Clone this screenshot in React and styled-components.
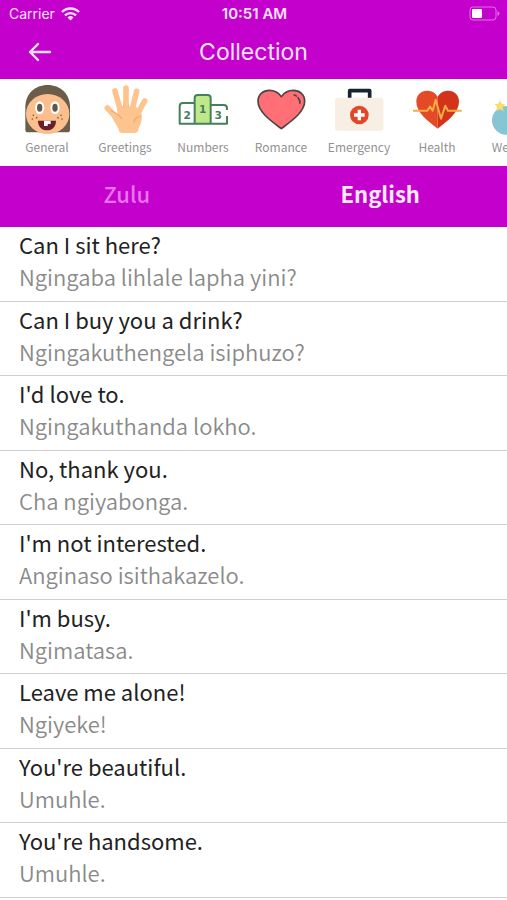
import React, { useState } from "react";
import styled, { createGlobalStyle } from "styled-components";

const GlobalStyle = createGlobalStyle`
  * {
    box-sizing: border-box;
  }
  body {
    margin: 0;
    background: #fff;
    font-family: "Noto Sans CJK SC", "Noto Sans", sans-serif;
  }
  button {
    border: 0;
    padding: 0;
    background: none;
    font: inherit;
    cursor: pointer;
  }
`;

const TopBar = styled.header`
  background: #c400cc;
  color: #fbe3fc;
  font-family: Inter, sans-serif;
`;

const StatusBar = styled.div`
  display: grid;
  grid-template-columns: 1fr auto 1fr;
  align-items: center;
  height: 27px;
  padding: 0 7px 0 9px;
  font-size: 14px;
`;

const Carrier = styled.div`
  display: flex;
  align-items: center;
  gap: 6px;
`;

const Time = styled.span`
  font-size: 15px;
  font-weight: 600;
`;

const Battery = styled.svg`
  justify-self: end;
`;

const NavBar = styled.div`
  display: grid;
  grid-template-columns: 48px 1fr 48px;
  align-items: center;
  height: 52px;
  padding: 0 16px 3px;
`;

const BackButton = styled.button`
  display: flex;
  justify-content: center;
  color: inherit;
`;

const Title = styled.h1`
  margin: 0;
  text-align: center;
  font-size: 23px;
  font-weight: 400;
`;

const Categories = styled.nav`
  display: flex;
  height: 87px;
  padding: 6px 8px 0;
  overflow-x: auto;
  scrollbar-width: none;
`;

const Category = styled.button`
  display: flex;
  flex: 0 0 78px;
  flex-direction: column;
  align-items: center;
  gap: 6px;
  color: #929292;
  font-size: 12px;
  line-height: 16px;
`;

const Tabs = styled.div`
  display: grid;
  grid-template-columns: 1fr 1fr;
  background: #c400cc;
`;

const Tab = styled.button`
  height: 61px;
  padding-bottom: 8px;
  font-size: 22px;
  font-weight: ${(props) => (props.$active ? 700 : 500)};
  color: ${(props) => (props.$active ? "#fdeafd" : "#e874ec")};
`;

const PhraseList = styled.ul`
  margin: 0;
  padding: 0;
  list-style: none;
`;

const Phrase = styled.li`
  height: 75px;
  padding: 1px 19px 0;
  border-bottom: 1px solid #cfcfcf;
  font-size: 22px;
  line-height: 32px;
  &:nth-child(even) {
    height: 74px;
  }
`;

const Source = styled.div`
  color: #222;
`;

const Translation = styled.div`
  color: #8a8a8a;
  font-weight: 350;
`;

const Icon = ({ children }) => (
  <svg width="48" height="48" viewBox="0 0 144 144" overflow="visible" aria-hidden="true">
    {children}
  </svg>
);

const GeneralIcon = () => (
  <Icon>
    <path d="M7 134V66C7 26 36 0 74 0s67 26 67 66v68q0 8-8 8H15q-8 0-8-8z" fill="#6c5d4b" />
    <ellipse cx="74" cy="87" rx="65" ry="60" fill="#fbbf8e" />
    <ellipse cx="50" cy="68" rx="14" ry="19" fill="#fff" />
    <ellipse cx="96" cy="68" rx="14" ry="19" fill="#fff" />
    <ellipse cx="50" cy="68" rx="8" ry="12" fill="#63564a" />
    <ellipse cx="96" cy="68" rx="8" ry="12" fill="#63564a" />
    <g fill="#875a3d">
      <circle cx="31" cy="91" r="2.5" />
      <circle cx="28" cy="102" r="2.5" />
      <circle cx="41" cy="98" r="2.5" />
      <circle cx="114" cy="91" r="2.5" />
      <circle cx="105" cy="98" r="2.5" />
      <circle cx="117" cy="102" r="2.5" />
    </g>
    <path d="M45 107h54c0 18-11 29-27 29s-27-11-27-29z" fill="#6b1f2d" />
    <path d="M63 107h20v10H74v6H63z" fill="#fff" />
  </Icon>
);

const HandIcon = () => (
  <Icon>
    <g stroke="#fec490" strokeLinecap="round" strokeWidth="17" fill="none">
      <path d="M42 18l16 58" />
      <path d="M75 9v60" />
      <path d="M107 19L93 76" />
      <path d="M131 48l-24 44" />
      <path d="M19 69l32 34" />
    </g>
    <path d="M48 62l58 4 16 22c2 20-3 30-9 42 0 9-4 14-12 14H65c-9 0-12-5-12-12L32 96l18-2z" fill="#fec490" />
    <path d="M31 77c15 8 25 13 31 24M118 95c-10 1-17 7-19 16" fill="none" stroke="#f5a874" strokeWidth="4" strokeLinecap="round" />
    <path d="M67 56l3 14M83 56l-2 14" stroke="#f5ad7c" strokeWidth="2" />
  </Icon>
);

const NumbersIcon = () => (
  <Icon>
    <path d="M47 116V37q0-8 8-8h32q8 0 8 8v79z" fill="#bfe88b" />
    <g fill="none" stroke="#467f5c" strokeWidth="6" strokeLinejoin="round">
      <path d="M47 54H12q-10 0-10 10v52h142V93" />
      <path d="M47 116V39q0-9 9-9h30q9 0 9 9v77" />
      <path d="M95 60h39q10 0 10 10v5" />
    </g>
    <g fill="#467f5c" fontFamily="DejaVu Sans" fontSize="32" fontWeight="700" textAnchor="middle">
      <text x="25" y="102">2</text>
      <text x="71" y="84">1</text>
      <text x="118" y="102">3</text>
    </g>
  </Icon>
);

const RomanceIcon = () => (
  <Icon>
    <path
      d="M73 131C40 106 3 80 3 49 3 29 18 16 37 16c16 0 28 7 36 19 8-12 20-19 36-19 19 0 34 13 34 33 0 31-37 57-70 82z"
      fill="#ff6f75"
      stroke="#514448"
      strokeWidth="5"
      strokeLinejoin="round"
    />
    <path d="M111 30c3 0 5 1 7 3M123 38c5 5 6 10 6 17" fill="none" stroke="#514448" strokeWidth="5" strokeLinecap="round" />
  </Icon>
);

const EmergencyIcon = () => (
  <Icon>
    <path d="M44 40V17h60v23" fill="none" stroke="#18232e" strokeWidth="11" strokeLinejoin="round" />
    <rect x="0" y="38" width="145" height="99" rx="8" fill="#f7eee4" />
    <circle cx="73" cy="90" r="28" fill="#e2472a" />
    <path d="M73 74v32M57 90h32" stroke="#fff" strokeWidth="10" />
  </Icon>
);

const HealthIcon = () => (
  <Icon>
    <path d="M74 131C45 108 10 82 10 50c0-20 14-33 32-33 14 0 26 6 32 19z" fill="#e54a27" />
    <path d="M74 131c29-23 64-49 64-81 0-20-14-33-32-33-14 0-26 6-32 19z" fill="#d23319" />
    <path d="M0 77h43l8-12 8 12 9-33 16 57 13-39 8 15h41" fill="none" stroke="#f6ad45" strokeWidth="6" strokeLinejoin="round" />
  </Icon>
);

const WeatherIcon = () => (
  <Icon>
    <circle cx="46" cy="106" r="43" fill="#86c5d3" />
    <path d="M27 46l5 10 11 1-8 9 3 12-11-5-11 5 2-12-8-9 12-1z" fill="#fbdc68" />
  </Icon>
);

const categories = [
  { name: "General", icon: GeneralIcon },
  { name: "Greetings", icon: HandIcon },
  { name: "Numbers", icon: NumbersIcon },
  { name: "Romance", icon: RomanceIcon },
  { name: "Emergency", icon: EmergencyIcon },
  { name: "Health", icon: HealthIcon },
  { name: "Weather", icon: WeatherIcon },
];

const phrases = [
  ["Can I sit here?", "Ngingaba lihlale lapha yini?"],
  ["Can I buy you a drink?", "Ngingakuthengela isiphuzo?"],
  ["I'd love to.", "Ngingakuthanda lokho."],
  ["No, thank you.", "Cha ngiyabonga."],
  ["I'm not interested.", "Anginaso isithakazelo."],
  ["I'm busy.", "Ngimatasa."],
  ["Leave me alone!", "Ngiyeke!"],
  ["You're beautiful.", "Umuhle."],
  ["You're handsome.", "Umuhle."],
];

export default function App() {
  const [language, setLanguage] = useState("English");

  return (
    <>
      <GlobalStyle />
      <TopBar>
        <StatusBar>
          <Carrier>
            <span>Carrier</span>
            <svg width="19" height="14" viewBox="0 0 19 14" fill="none" stroke="currentColor" strokeWidth="2.4">
              <path d="M1 5a12 12 0 0 1 17 0" />
              <path d="M4 8.4a7.8 7.8 0 0 1 11 0" />
              <path d="M9.5 13.5l-3-3a4.3 4.3 0 0 1 6 0z" fill="currentColor" stroke="none" />
            </svg>
          </Carrier>
          <Time>10:51 AM</Time>
          <Battery width="31" height="15" viewBox="0 0 31 15">
            <rect x="1" y="1" width="26" height="13" rx="3" fill="none" stroke="#e170e5" />
            <rect x="3" y="3" width="10" height="9" rx="1" fill="#fff" />
            <path d="M28.5 5v5q2-1 2-2.5t-2-2.5z" fill="#e170e5" />
          </Battery>
        </StatusBar>
        <NavBar>
          <BackButton aria-label="Back">
            <svg width="24" height="20" viewBox="0 0 24 20" fill="none" stroke="currentColor" strokeWidth="2.4" strokeLinecap="round" strokeLinejoin="round">
              <path d="M22 10H2M10 2L2 10l8 8" />
            </svg>
          </BackButton>
          <Title>Collection</Title>
        </NavBar>
      </TopBar>
      <Categories>
        {categories.map(({ name, icon: CategoryIcon }) => (
          <Category key={name}>
            <CategoryIcon />
            {name}
          </Category>
        ))}
      </Categories>
      <Tabs>
        {["Zulu", "English"].map((name) => (
          <Tab key={name} $active={language === name} onClick={() => setLanguage(name)}>
            {name}
          </Tab>
        ))}
      </Tabs>
      <PhraseList>
        {phrases.map(([source, translation]) => (
          <Phrase key={source}>
            <Source>{source}</Source>
            <Translation>{translation}</Translation>
          </Phrase>
        ))}
      </PhraseList>
    </>
  );
}
